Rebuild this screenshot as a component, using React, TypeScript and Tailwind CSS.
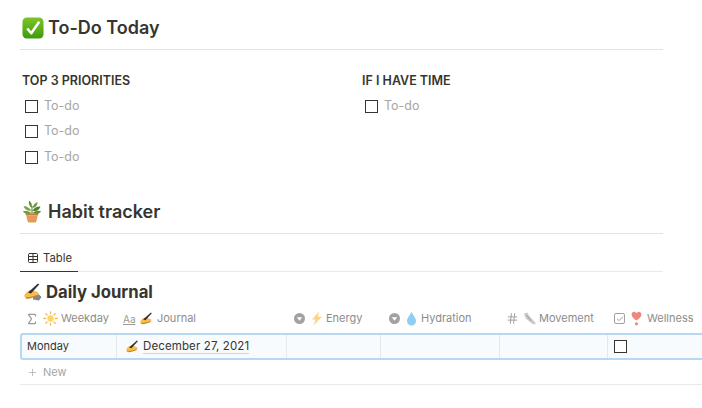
import { Sigma, Hash, Plus, Table, Check } from "lucide-react";
import type { ReactNode } from "react";

function CheckEmoji() {
  return (
    <svg width="22" height="22" viewBox="0 0 23 23" className="shrink-0">
      <defs>
        <linearGradient id="chk" x1="0" y1="0" x2="0" y2="1">
          <stop offset="0" stopColor="#7cc528" />
          <stop offset="1" stopColor="#3f9a0c" />
        </linearGradient>
      </defs>
      <rect x="0.5" y="0.5" width="22" height="22" rx="4.5" fill="url(#chk)" />
      <path d="M5.5 12l4.2 5L18 5" fill="none" stroke="#fff" strokeWidth="2.6" strokeLinejoin="round" />
    </svg>
  );
}

function PlantEmoji() {
  return (
    <svg width="20" height="23" viewBox="0 0 20 23" className="shrink-0">
      <path d="M10 14V6" stroke="#5c7a2e" strokeWidth="1" />
      <path d="M9.500 8C7 6 6.500 3 7 .5c2.500 1.500 3.500 4.500 2.500 7.500z" fill="#5f8f35" />
      <path d="M10.500 8c.5-3 2.500-5 5-6 0 3-1.500 5.500-5 6z" fill="#6c9c3a" />
      <path d="M9.500 10.500C7 7.500 4.500 6 1.500 6c1 3.500 4.500 5.500 8 4.500z" fill="#79a845" />
      <path d="M10.500 10.500c2-3 5-4.500 8-4 -1 3.500-4.500 5.500-8 4z" fill="#527f2c" />
      <path d="M9.500 13C6.500 11 3.500 10.500 .8 11.500c2 2.500 5.500 3.500 8.700 1.500z" fill="#6c9c3a" />
      <path d="M10.500 13c2.500-2 6-3 8.700-1.500-2 2.500-5.500 3.500-8.700 1.500z" fill="#5f8f35" />
      <path d="M3.500 13.500h13l-.4 2H3.900z" fill="#c97b42" />
      <path d="M4.300 15.500h11.400L14.500 21q-.3 1.500-1.700 1.500H7.200q-1.400 0-1.700-1.500z" fill="#e39a5a" />
    </svg>
  );
}

function WritingEmoji({ size = 18, sleeve = true }: { size?: number; sleeve?: boolean }) {
  return (
    <svg width={size} height={size} viewBox="0 0 18 18" className="shrink-0">
      {sleeve && <path d="M9 14.500l5.500-3.500 3 3-2.500 3.500-6-1z" fill="#7d8791" />}
      <path d="M.5 12c1.500-3 4-5 6.500-5 2 .2 4 1 6.500 2 1.800.8 1.500 3-.2 3.500-3 1-7.500 3-10.500 2.500-2-.3-3-1.700-2.300-3z" fill="#f6bf4b" />
      <path d="M1 14c3 .8 7.500-.5 12.500-2.300l.2 1.300c-4 1.700-9 3.200-11.700 2.500z" fill="#c9862a" />
      <path d="M4 9.500L14 .5l1.200 1L7 10.500z" fill="#2f2f2f" />
    </svg>
  );
}

function SunEmoji() {
  return (
    <svg width="15" height="15" viewBox="0 0 15 15" className="shrink-0">
      <circle cx="7.500" cy="7.500" r="3.200" fill="#fbd56a" />
      <g stroke="#f6b756" strokeWidth="1.300" strokeLinecap="round">
        <path d="M7.500 .8v1.800M7.500 12.400v1.800M.8 7.500h1.800M12.400 7.500h1.800M2.800 2.800l1.200 1.200M11 11l1.200 1.200M2.800 12.200L4 11M11 4l1.200-1.200" />
      </g>
    </svg>
  );
}

function BoltEmoji() {
  return (
    <svg width="12" height="15" viewBox="0 0 12 15" className="shrink-0">
      <path d="M8 .5L1 8.500h3.500L2.500 14.500 11 5.800H7z" fill="#fbd583" />
    </svg>
  );
}

function DropEmoji() {
  return (
    <svg width="12" height="15" viewBox="0 0 12 15" className="shrink-0">
      <path d="M5.500 .5C4.500 4 1 6.500 1 10a4.500 4.500 0 0 0 9 0C10 6.500 6.500 4 5.500 .5z" fill="#8fcdf3" />
    </svg>
  );
}

function ShoeEmoji() {
  return (
    <svg width="13" height="15" viewBox="0 0 14 15" className="shrink-0">
      <path d="M1 2.500L4.500 1 7 5l6 6.500c.8 1 .6 2.300-.6 2.300-1.500 0-3-.8-4.400-2.300L3 7.500z" fill="#c9c9c9" />
      <path d="M4 4l4.500 6" stroke="#9a9a9a" strokeWidth="1" />
    </svg>
  );
}

function HeartEmoji() {
  return (
    <svg width="13" height="15" viewBox="0 0 13 15" className="shrink-0">
      <path d="M5.500 9.500C3 7.500 .6 5.800 .6 3.400 .6 1.800 1.800 .8 3 .8c1.100 0 2 .6 2.500 1.500C6 1.400 6.900.8 8 .8c1.200 0 2.400 1 2.400 2.600 0 2.400-2.400 4.100-4.900 6.100z" fill="#ec8a80" />
      <circle cx="5.500" cy="12.800" r="1.600" fill="#ec8a80" />
    </svg>
  );
}

function SelectIcon() {
  return (
    <svg width="11" height="11" viewBox="0 0 11 11" className="shrink-0">
      <circle cx="5.500" cy="5.500" r="5.500" fill="#a3a29f" />
      <path d="M2.800 4.200h5.400L5.500 7.800z" fill="#fff" />
    </svg>
  );
}

function Box() {
  return <span className="block h-[13px] w-[13px] shrink-0 border-[1.500px] border-[#37352f] bg-white" />;
}

function Todo() {
  return (
    <div className="flex h-[25.500px] items-center gap-[6px] pl-[3px]">
      <Box />
      <span className="text-[12.500px] text-[#a6a6a4]">To-do</span>
    </div>
  );
}

function SectionTitle({ icon, children }: { icon: ReactNode; children: ReactNode }) {
  return (
    <div className="flex h-[38px] items-center border-b border-[#e3e3e1] pb-[6px] pl-[2px]">
      <span className="w-[26px]">{icon}</span>
      <h2 className="text-[18px] leading-none font-semibold text-[#37352f]">{children}</h2>
    </div>
  );
}

function Head({ width, icon, emoji, label }: { width: number; icon: ReactNode; emoji: ReactNode; label: string }) {
  return (
    <div className="flex shrink-0 items-center gap-[3px] pl-[7px]" style={{ width }}>
      <span className="mr-[3px] flex shrink-0 items-center">{icon}</span>
      {emoji}
      <span className="text-[11px] whitespace-nowrap text-[#8d8c89]">{label}</span>
    </div>
  );
}

export default function App() {
  return (
    <div className="h-[408px] w-[702px] overflow-hidden bg-white pt-[12px] pl-5 font-['Inter','Liberation_Sans',sans-serif] text-[#37352f]">
      <div className="w-[643px]">
        <SectionTitle icon={<CheckEmoji />}>To-Do Today</SectionTitle>
        <div className="mt-[21px] grid grid-cols-[340px_1fr] pl-[2px]">
          <div>
            <h3 className="text-[12.500px] leading-5 font-semibold">TOP 3 PRIORITIES</h3>
            <div className="mt-[2.500px]">
              <Todo />
              <Todo />
              <Todo />
            </div>
          </div>
          <div>
            <h3 className="text-[12.500px] leading-5 font-semibold">IF I HAVE TIME</h3>
            <div className="mt-[2.500px]">
              <Todo />
            </div>
          </div>
        </div>
        <div className="mt-[26px]">
          <SectionTitle icon={<PlantEmoji />}>Habit tracker</SectionTitle>
        </div>
        <div className="flex h-[38px] items-end border-b border-[#e9e9e7]">
          <div className="-mb-px flex h-[29px] w-[58px] items-center gap-[4px] border-b-[1.500px] border-[#37352f] pt-[2px] pl-[7px]">
            <Table size={12} strokeWidth={2} />
            <span className="text-[11.300px]">Table</span>
          </div>
        </div>
      </div>

      <div className="mt-[8px] flex h-[24px] items-center gap-[4px] pl-[4px]">
        <WritingEmoji />
        <span className="text-[16.700px] leading-none font-bold">Daily Journal</span>
      </div>

      <div className="mt-[3px] flex h-[26px] w-[700px] items-center pb-[3px]">
        <Head
          width={96}
          icon={<Sigma size={14} strokeWidth={2} className="-ml-[2px] -mr-[2px] text-[#9b9a97]" />}
          emoji={<SunEmoji />}
          label="Weekday"
        />
        <Head
          width={171}
          icon={<span className="w-[11px] text-[10px] leading-none text-[#9b9a97] underline">Aa</span>}
          emoji={<WritingEmoji size={14} sleeve={false} />}
          label="Journal"
        />
        <Head width={95} icon={<SelectIcon />} emoji={<BoltEmoji />} label="Energy" />
        <Head width={117} icon={<SelectIcon />} emoji={<DropEmoji />} label="Hydration" />
        <Head
          width={108}
          icon={<Hash size={13} strokeWidth={1.700} className="-mr-[2px] text-[#9b9a97]" />}
          emoji={<ShoeEmoji />}
          label="Movement"
        />
        <Head
          width={95}
          icon={
            <span className="flex h-[11px] w-[11px] shrink-0 items-center justify-center rounded-[2px] border border-[#a3a29f]">
              <Check size={8} strokeWidth={2.500} className="text-[#8d8c89]" />
            </span>
          }
          emoji={<HeartEmoji />}
          label="Wellness"
        />
      </div>

      <div className="flex h-[27px] w-[690px] rounded-l-[3px] border-y-2 border-l-2 border-[#b8d7f2] bg-[#f7fbfe] text-[11px]">
        <div className="flex w-[95px] items-center border-r border-[#e3e9ee] pl-[5px]">Monday</div>
        <div className="flex w-[170px] items-center gap-[3px] border-r border-[#e3e9ee] pl-[9px]">
          <WritingEmoji size={14} sleeve={false} />
          <span className="border-b border-[#d5d5d3] text-[11.500px] leading-[14px] tracking-[0.12px]">December 27, 2021</span>
        </div>
        <div className="w-[94px] border-r border-[#e3e9ee]" />
        <div className="w-[119px] border-r border-[#e3e9ee]" />
        <div className="w-[108px] border-r border-[#e3e9ee]" />
        <div className="flex flex-1 items-center pl-[6px]">
          <Box />
        </div>
      </div>

      <div className="flex h-[25px] w-[682px] items-center gap-[5px] border-b border-[#e9e9e7] pl-[7px] text-[#a6a6a4]">
        <Plus size={11} strokeWidth={1.500} />
        <span className="text-[11px]">New</span>
      </div>
    </div>
  );
}
